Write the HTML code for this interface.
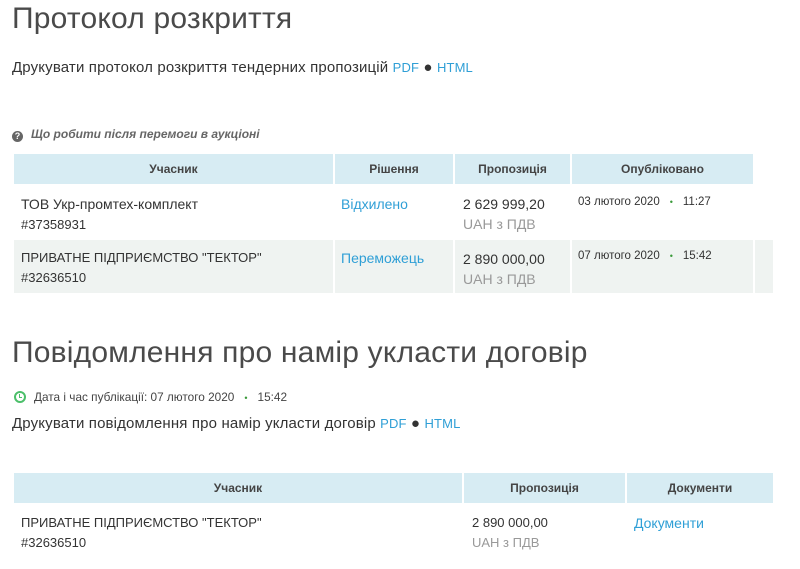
<!DOCTYPE html>
<html><head><meta charset="utf-8"><style>
*{margin:0;padding:0;box-sizing:border-box}
body{width:800px;height:569px;background:#fff;font-family:"Liberation Sans",sans-serif;color:#333;position:relative;overflow:hidden}
.a{position:absolute;white-space:nowrap}
h1{position:absolute;font-weight:normal;font-size:30px;color:#4a4a4a;white-space:nowrap;letter-spacing:0.2px}
a{color:#2f9fd6;text-decoration:none}
.hd{position:absolute;background:#d7ecf3;font-size:12px;font-weight:bold;color:#444;text-align:center;line-height:30px}
.bg{position:absolute;background:#eff3f1}
.t{position:absolute;font-size:13px;line-height:20px;white-space:nowrap}
.g{color:#999}
.s{font-size:11.5px}
.dot{color:#3a9a3a;font-size:9px;margin:0 10px}
.pr{font-size:15px;letter-spacing:0.15px}
</style></head><body>
<h1 style="left:12px;top:2px">Протокол розкриття</h1>
<div class="a pr" style="left:12px;top:59px">Друкувати протокол розкриття тендерних пропозицій <a style="font-size:13px">PDF</a> ● <a style="font-size:13px">HTML</a></div>

<div class="a" style="left:12px;top:127px;font-size:12px;font-style:italic;font-weight:bold;color:#666"><span style="display:inline-block;width:11px;height:11px;border-radius:50%;background:#666;color:#fff;font-size:9px;text-align:center;line-height:11px;font-style:normal;margin-right:8px;vertical-align:-1px">?</span>Що робити після перемоги в аукціоні</div>

<div class="hd" style="left:14px;top:154px;width:319px">Учасник</div>
<div class="hd" style="left:335px;top:154px;width:118px">Рішення</div>
<div class="hd" style="left:455px;top:154px;width:115px">Пропозиція</div>
<div class="hd" style="left:572px;top:154px;width:181px">Опубліковано</div>

<div class="t" style="left:21px;top:194px"><span style="font-size:14px">ТОВ Укр-промтех-комплект</span><br>#37358931</div>
<div class="t" style="left:341px;top:194px"><a style="font-size:14px">Відхилено</a></div>
<div class="t" style="left:463px;top:194px;font-size:14px">2 629 999,20<br><span class="g">UAH з ПДВ</span></div>
<div class="t s" style="left:578px;top:192px">03 лютого 2020<span class="dot">•</span>11:27</div>

<div class="bg" style="left:14px;top:240px;width:319px;height:53px"></div>
<div class="bg" style="left:335px;top:240px;width:118px;height:53px"></div>
<div class="bg" style="left:455px;top:240px;width:115px;height:53px"></div>
<div class="bg" style="left:572px;top:240px;width:181px;height:53px"></div>
<div class="bg" style="left:755px;top:240px;width:18px;height:53px"></div>
<div class="t" style="left:21px;top:248px">ПРИВАТНЕ ПІДПРИЄМСТВО "ТЕКТОР"<br>#32636510</div>
<div class="t" style="left:341px;top:248px"><a style="font-size:14px">Переможець</a></div>
<div class="t" style="left:463px;top:249px;font-size:14px">2 890 000,00<br><span class="g">UAH з ПДВ</span></div>
<div class="t s" style="left:578px;top:246px">07 лютого 2020<span class="dot">•</span>15:42</div>

<h1 style="left:12px;top:336px">Повідомлення про намір укласти договір</h1>
<div class="a" style="left:14px;top:390px;font-size:11.8px;color:#444"><span style="display:inline-block;width:12px;height:12px;border:2px solid #4cbf6a;border-radius:50%;vertical-align:-2px;margin-right:8px;position:relative"><span style="position:absolute;left:3px;top:1px;width:3px;height:4px;border-left:1.5px solid #4cbf6a;border-bottom:1.5px solid #4cbf6a"></span></span>Дата і час публікації: 07 лютого 2020<span class="dot">•</span>15:42</div>
<div class="a pr" style="left:12px;top:415px">Друкувати повідомлення про намір укласти договір <a style="font-size:13px">PDF</a> ● <a style="font-size:13px">HTML</a></div>

<div class="hd" style="left:14px;top:473px;width:448px">Учасник</div>
<div class="hd" style="left:464px;top:473px;width:161px">Пропозиція</div>
<div class="hd" style="left:627px;top:473px;width:146px">Документи</div>
<div class="t" style="left:21px;top:513px">ПРИВАТНЕ ПІДПРИЄМСТВО "ТЕКТОР"<br>#32636510</div>
<div class="t" style="left:472px;top:513px">2 890 000,00<br><span class="g">UAH з ПДВ</span></div>
<div class="t" style="left:634px;top:513px"><a style="font-size:14px">Документи</a></div>
</body></html>
